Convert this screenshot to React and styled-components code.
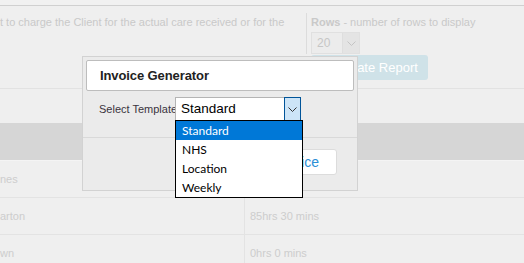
import React from 'react'
import { styled, createGlobalStyle } from 'styled-components'

const GlobalStyle = createGlobalStyle`
  html, body {
    margin: 0;
    padding: 0;
    background: #efefef;
    font-family: "Liberation Sans", Arial, sans-serif;
    overflow: hidden;
  }
`

const Page = styled.div`
  position: relative;
  width: 524px;
  height: 263px;
  overflow: hidden;
  background: #efefef;
`

const TopBar = styled.div`
  height: 5px;
  border-bottom: 1px solid #d0d0d0;
  background: #f1f1f1;
`

const Filters = styled.div`
  display: flex;
  height: 82px;
  border-bottom: 1px solid #e2e2e2;
`

const Description = styled.div`
  width: 306px;
  padding-top: 9px;
  font-size: 11px;
  line-height: 14px;
  color: #c9c9c9;
  white-space: nowrap;
  overflow: hidden;
`

const RowsCol = styled.div`
  display: flex;
  flex-direction: column;
  align-items: flex-start;
`

const RowsField = styled.div`
  margin-top: 7px;
  height: 39px;
  padding: 2px 0 0 4px;
  border-left: 1px solid #dcdcdc;
  font-size: 11px;
  line-height: 14px;
  color: #c9c9c9;
  white-space: nowrap;

  b {
    font-weight: bold;
  }
`

const SmallSelect = styled.div`
  margin-top: 3px;
  display: flex;
  width: 47px;
  height: 20px;
  border: 1px solid #e0e0e0;
  background: #ececec;
  font-size: 12px;
  color: #c6c6c6;

  span {
    flex: 1;
    padding-left: 5px;
    line-height: 20px;
  }
`

const SmallArrow = styled.div`
  width: 16px;
  border-left: 1px solid #dedede;
  background: #e4e4e4;
  display: flex;
  align-items: center;
  justify-content: center;
`

const ReportButton = styled.div`
  margin: 1px 0 0 5px;
  height: 25px;
  padding: 0 10px;
  border-radius: 3px;
  background: #cfe2e8;
  color: #fff;
  font-size: 13px;
  line-height: 25px;
  white-space: nowrap;
`

const Spacer = styled.div`
  height: 34px;
`

const HeadBand = styled.div`
  height: 37px;
  background: #d6d6d6;
  border-bottom: 1px solid #f4f4f4;
`

const Row = styled.div`
  display: grid;
  grid-template-columns: 245px 1fr;
  height: 36px;
  border-bottom: 1px solid #e3e3e3;
  font-size: 11px;
  color: #cdcdcd;
`

const Cell = styled.div`
  display: flex;
  align-items: center;
  padding-left: ${({ $pad }) => $pad || 0}px;
  border-right: ${({ $divider }) => ($divider ? '1px solid #e3e3e3' : 'none')};
  white-space: nowrap;
  overflow: hidden;
`

const Modal = styled.div`
  position: absolute;
  left: 82px;
  top: 56px;
  width: 274px;
  height: 133px;
  border: 1px solid #d2d2d2;
  background: #ebebeb;
  display: flex;
  flex-direction: column;
`

const TitleBox = styled.div`
  margin: 3px 3px 0 3px;
  height: 29px;
  border: 1px solid #bdbdbd;
  border-radius: 2px;
  background: #fff;
  padding-left: 13px;
  display: flex;
  align-items: center;
  font-size: 13px;
  font-weight: bold;
  letter-spacing: -0.1px;
  color: #222;
`

const Body = styled.div`
  padding: 6px 0 0 16px;
  display: flex;
  align-items: center;
  height: 24px;
  margin-bottom: 16px;
`

const Label = styled.div`
  width: 76px;
  font-size: 11px;
  color: #3a3440;
  white-space: nowrap;
`

const SelectBox = styled.div`
  position: relative;
  display: flex;
  width: 124px;
  height: 22px;
  border: 1px solid #b4b4b4;
  background: #fff;
`

const SelectValue = styled.div`
  flex: 1;
  padding-left: 5px;
  font-size: 13.5px;
  line-height: 22px;
  color: #000;
`

const ArrowBox = styled.div`
  width: 15px;
  margin: -1px -1px -1px 0;
  border: 1px solid #005499;
  background: #cce4f7;
  display: flex;
  align-items: center;
  justify-content: center;
`

const OptionList = styled.div`
  position: absolute;
  left: -1px;
  top: 100%;
  width: 126px;
  border: 1px solid #000;
  background: #fff;
  z-index: 2;
`

const Option = styled.div`
  height: 19px;
  padding-left: 6px;
  font-family: Lato, "Noto Sans", sans-serif;
  font-size: 12px;
  line-height: 19px;
  color: ${({ $active }) => ($active ? '#fff' : '#000')};
  background: ${({ $active }) => ($active ? '#0078d7' : '#fff')};
`

const Footer = styled.div`
  border-top: 1px solid #d9d9d9;
  padding: 11px 20px 0 0;
  display: flex;
  justify-content: flex-end;
`

const InvoiceButton = styled.div`
  height: 24px;
  padding: 0 17px;
  border: 1px solid #dcdcdc;
  border-radius: 3px;
  background: #fff;
  color: #2b8fd6;
  font-size: 14px;
  line-height: 24px;
  white-space: nowrap;
`

const Chevron = ({ color }) => (
  <svg width="9" height="5" viewBox="0 0 9 5">
    <path d="M0.5 0.5 L4.5 4.5 L8.5 0.5" fill="none" stroke={color} strokeWidth="1" />
  </svg>
)

const templates = ['Standard', 'NHS', 'Location', 'Weekly']

const rows = [
  ['nes', ''],
  ['arton', '85hrs 30 mins'],
  ['wn', '0hrs 0 mins'],
]

export default function App() {
  return (
    <Page>
      <GlobalStyle />
      <TopBar />
      <Filters>
        <Description>t to charge the Client for the actual care received or for the</Description>
        <RowsCol>
          <RowsField>
            <b>Rows</b> - number of rows to display
            <SmallSelect>
              <span>20</span>
              <SmallArrow>
                <Chevron color="#c4c4c4" />
              </SmallArrow>
            </SmallSelect>
          </RowsField>
          <ReportButton>Generate Report</ReportButton>
        </RowsCol>
      </Filters>
      <Spacer />
      <HeadBand />
      {rows.map(([name, time], i) => (
        <Row key={i}>
          <Cell $divider>{name}</Cell>
          <Cell $pad={5}>{time}</Cell>
        </Row>
      ))}

      <Modal>
        <TitleBox>Invoice Generator</TitleBox>
        <Body>
          <Label>Select Template</Label>
          <SelectBox>
            <SelectValue>Standard</SelectValue>
            <ArrowBox>
              <Chevron color="#333" />
            </ArrowBox>
            <OptionList>
              {templates.map((t, i) => (
                <Option key={t} $active={i === 0}>{t}</Option>
              ))}
            </OptionList>
          </SelectBox>
        </Body>
        <Footer>
          <InvoiceButton>Generate Invoice</InvoiceButton>
        </Footer>
      </Modal>
    </Page>
  )
}
